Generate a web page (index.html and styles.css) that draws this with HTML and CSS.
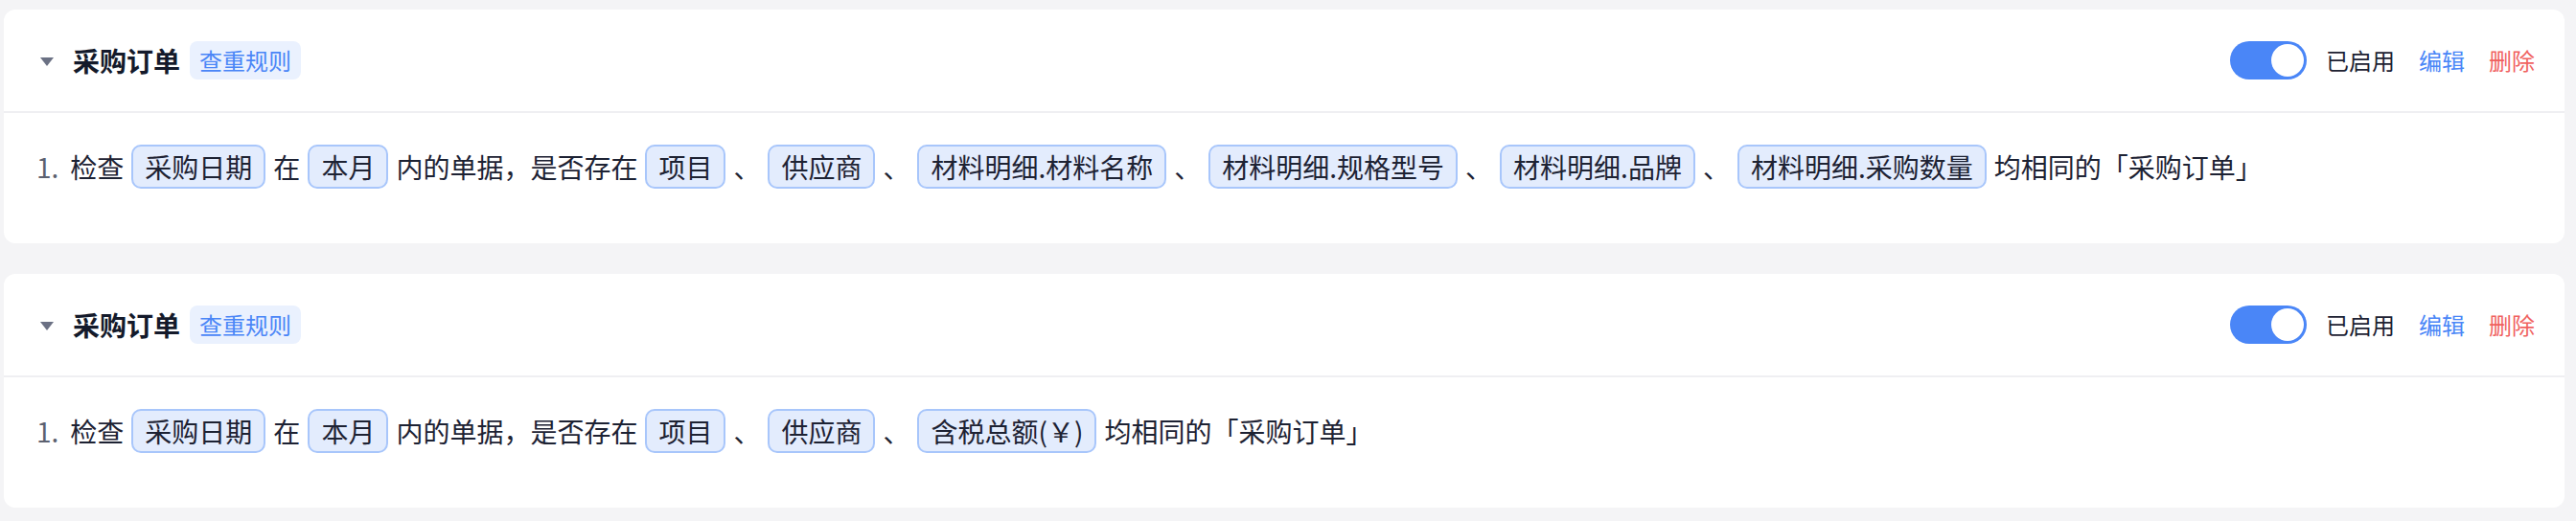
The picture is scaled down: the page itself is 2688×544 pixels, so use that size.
FILE: index.html
```html
<!DOCTYPE html>
<html lang="zh-CN">
<head>
  <meta charset="UTF-8" />
  <meta name="viewport" content="width=device-width, initial-scale=1" />
  <title>查重规则</title>
  <link rel="stylesheet" href="styles.css">
</head>
<body>

  <div class="rule-list">

    <div class="rule-card">
      <div class="rule-head">
        <span class="caret"></span>
        <span class="rule-title">采购订单</span>
        <span class="rule-type">查重规则</span>
        <div class="rule-actions">
          <span class="switch on"><i></i></span>
          <span class="switch-label">已启用</span>
          <a class="act edit">编辑</a>
          <a class="act del">删除</a>
        </div>
      </div>
      <ol class="rule-body">
        <li>
          <span class="no">1.</span>
          <span>检查</span>
          <span class="field">采购日期</span>
          <span>在</span>
          <span class="field">本月</span>
          <span>内的单据，是否存在</span>
          <span class="field">项目</span>
          <span class="sep">、</span>
          <span class="field">供应商</span>
          <span class="sep">、</span>
          <span class="field">材料明细.材料名称</span>
          <span class="sep">、</span>
          <span class="field">材料明细.规格型号</span>
          <span class="sep">、</span>
          <span class="field">材料明细.品牌</span>
          <span class="sep">、</span>
          <span class="field">材料明细.采购数量</span>
          <span>均相同的「采购订单」</span>
        </li>
      </ol>
    </div>

    <div class="rule-card">
      <div class="rule-head">
        <span class="caret"></span>
        <span class="rule-title">采购订单</span>
        <span class="rule-type">查重规则</span>
        <div class="rule-actions">
          <span class="switch on"><i></i></span>
          <span class="switch-label">已启用</span>
          <a class="act edit">编辑</a>
          <a class="act del">删除</a>
        </div>
      </div>
      <ol class="rule-body">
        <li>
          <span class="no">1.</span>
          <span>检查</span>
          <span class="field">采购日期</span>
          <span>在</span>
          <span class="field">本月</span>
          <span>内的单据，是否存在</span>
          <span class="field">项目</span>
          <span class="sep">、</span>
          <span class="field">供应商</span>
          <span class="sep">、</span>
          <span class="field">含税总额(￥)</span>
          <span>均相同的「采购订单」</span>
        </li>
      </ol>
    </div>

  </div>

</body>
</html>
```

FILE: styles.css
```css
* { margin:0; padding:0; box-sizing:border-box; font-family:"Noto Sans CJK SC","Noto Sans",sans-serif; }
body { background:#f4f4f6; color:#1d2233; }
.rule-list { display:flex; flex-direction:column; gap:32px; padding:10px 12px 14px 4px; }
.rule-card { background:#fff; border-radius:12px; }

/* header */
.rule-head { display:flex; align-items:center; height:108px; padding:0 31px 0 38px; border-bottom:2px solid #efeff2; }
.caret { width:0; height:0; border-left:7.5px solid transparent; border-right:7.5px solid transparent; border-top:9px solid #6b7184; margin:2px 20px 0 0; }
.rule-title { font-size:28px; font-weight:700; color:#141a2b; line-height:40px; }
.rule-type { margin-left:10px; height:40px; line-height:40px; padding:0 10px; border-radius:8px; background:#eaf1fe; color:#4a86f7; font-size:24px; }
.rule-actions { margin-left:auto; display:flex; align-items:center; font-size:24px; line-height:34px; }
.switch { position:relative; width:80px; height:40px; border-radius:20px; background:#c9ccd4; }
.switch i { position:absolute; top:3px; left:3px; width:34px; height:34px; border-radius:50%; background:#fff; }
.switch.on { background:#4a86f7; }
.switch.on i { left:43px; }
.switch-label { margin-left:20px; color:#1d2233; }
.act { margin-left:25px; cursor:pointer; }
.act.edit { color:#4a86f7; }
.act.del { color:#f0625f; }

/* body */
.rule-body { list-style:none; padding:32px 34px 56px; }
.rule-body li { display:flex; align-items:center; height:48px; font-size:28px; line-height:40px; white-space:nowrap; }
.no { color:#5c6170; margin-right:12px; }
.field { margin:0 8px; height:46px; line-height:42px; padding:0 12px; border:2px solid #a8c6fb; border-radius:10px; background:#e3ecfd; }
.sep { margin:0; }
```
